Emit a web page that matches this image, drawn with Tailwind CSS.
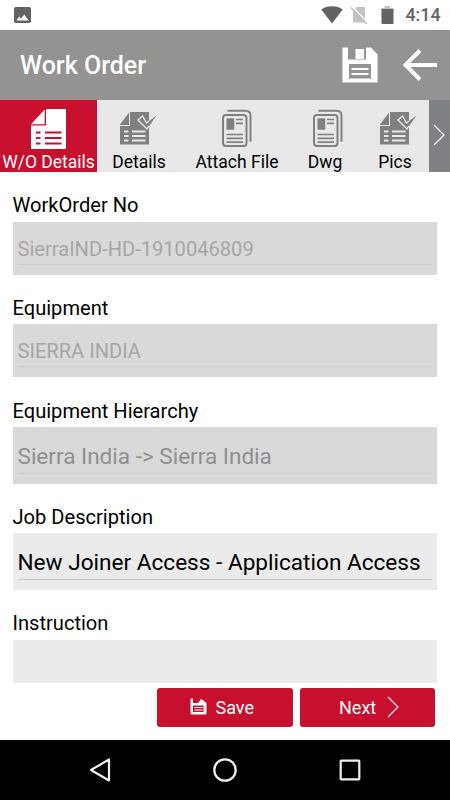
<!DOCTYPE html>
<html lang="en">
<head>
    <meta charset="UTF-8">
    <meta name="viewport" content="width=device-width, initial-scale=1.0">
    <title>Work Order</title>
    <script src="https://cdn.jsdelivr.net/npm/@tailwindcss/browser@4"></script>
</head>
<body class="bg-white font-['Roboto',sans-serif]">
<div class="w-[450px] h-[800px] flex flex-col overflow-hidden text-black">
    <!-- Status bar -->
    <div class="h-[30px] shrink-0 flex items-center pl-[14px] pr-[9px] text-[#636363]">
        <svg class="w-[17px] h-[16px]" viewBox="0 0 17 16"><rect width="17" height="16" rx="1.8" fill="currentColor"/><path d="M2.5 13.5 5.2 9.5 7 11.8 10.2 7.5 14.7 13.5z" fill="#fff"/></svg>
        <svg class="ml-auto w-[22px] h-[18px]" viewBox="0 0 22 18"><path d="M0.3 3.5C6 -.8 16 -.8 21.700 3.500L11 17.500z" fill="currentColor"/></svg>
        <svg class="ml-[7px] w-[18px] h-[18px]" viewBox="0 0 18 18"><path d="M3 4.500 6.500 1h7.300q1.200 0 1.200 1.200V16.500H3z" fill="#c3c3c3"/><path d="M2 .5 18 17" stroke="#fff" stroke-width="1.500"/><path d="M1 1.500 17 18" stroke="#bdbdbd" stroke-width="1.400"/></svg>
        <svg class="ml-[13px] w-[13px] h-[18px]" viewBox="0 0 13 18"><path d="M3.500 0h5.500v2h3.500v2H.5V2h3z" fill="#c3c3c3"/><path d="M.5 3h12v14q0 1-1 1h-10q-1 0-1-1z" fill="currentColor"/></svg>
        <span class="ml-[11.5px] w-[35.5px] text-[17.8px] leading-[20px] font-medium whitespace-nowrap">4:14</span>
    </div>

    <!-- Title bar -->
    <header class="h-[70px] shrink-0 flex items-center bg-[#949391] text-white pl-5 pr-[12px] pt-[2px]">
        <h1 class="text-[25px] font-medium">Work Order</h1>
        <svg class="ml-auto mb-[3px] w-[36px] h-[36px]" viewBox="0 0 36 36">
            <path d="M.5 .5H6v12h18V.5h5l6.500 7V35.500H.5z" fill="#fff"/>
            <rect x="13.500" y="2" width="8.500" height="10" fill="#fff"/>
            <rect x="7" y="17" width="22" height="14.500" fill="#949391"/>
            <path d="M9.500 22h17M9.500 27h17" stroke="#fff" stroke-width="2"/>
        </svg>
        <svg class="ml-[24px] mb-[3px] w-[36px] h-[34px]" viewBox="0 0 36 34"><path d="M35 17H4M18 2.500 3.500 17 18 31.500" fill="none" stroke="#fff" stroke-width="4"/></svg>
    </header>

    <!-- Tabs -->
    <nav class="h-[72px] shrink-0 flex overflow-hidden bg-[#e8e8e8] text-[17.5px] leading-[20px] text-center whitespace-nowrap">
        <div class="w-[97px] shrink-0 bg-[#c8102e] text-white flex flex-col items-center pt-[9px]">
            <svg class="w-[35px] h-[40px]" viewBox="0 0 35 40">
                <path d="M15 0H35v40H0V16.500h15z" fill="#fff"/>
                <path d="M13.700 .5V15.200H0z" fill="#fff"/>
                <path d="M5 23.500h4.500M5 29h4.500M5 34.500h4.500M14 23.500h16.500M14 29h16.500M14 34.500h16.500" stroke="#c8102e" stroke-width="2.200"/>
            </svg>
            <span class="mt-[3px]">W/O Details</span>
        </div>
        <div class="w-[84px] shrink-0 flex flex-col items-center pt-[12px]">
            <svg class="mr-px w-[37px] h-[33px]" viewBox="0 0 37 33">
                <path d="M10 0H29v32.500H0V14h10z" fill="#808080"/>
                <path d="M9 .5V13H0V12.500z" fill="#808080"/>
                <path d="M4 19.500h4.500M4 24h4.500M4 28.500h4.500M12 19.500h13.500M12 24h13.500M12 28.500h13.500" stroke="#e8e8e8" stroke-width="1.800"/>
                <path d="M18 8 22.500 4 26.500 11 36.500 3.500 27 17z" fill="#808080"/>
                <path d="M29 9 26.500 11 22.500 4 18 8 27 17 29 14" fill="none" stroke="#e8e8e8" stroke-width="1.400"/>
            </svg>
            <span class="mt-[7px]">Details</span>
        </div>
        <div class="w-[112px] shrink-0 flex flex-col items-center pt-[9px]">
            <svg class="mr-px w-[30px] h-[40px]" viewBox="0 0 30 40" fill="none" stroke="#808080" stroke-width="2">
                <rect x="1" y="6" width="23.500" height="31" rx="3"/>
                <path d="M5.500 1.800h18q5 0 5 5v26"/>
                <rect x="4.500" y="9.300" width="7.700" height="11.400" fill="#808080" stroke="none"/>
                <path d="M14 10.500h7M14 14.300h7M4.500 25.500h16.500M4.500 29.300h16.500M4.500 33.200h16.500" stroke-width="1.700"/>
            </svg>
            <span class="mt-[3px]">Attach File</span>
        </div>
        <div class="w-[64px] shrink-0 flex flex-col items-center pt-[9px]">
            <svg class="ml-[5px] w-[30px] h-[40px]" viewBox="0 0 30 40" fill="none" stroke="#808080" stroke-width="2">
                <rect x="1" y="6" width="23.500" height="31" rx="3"/>
                <path d="M5.500 1.800h18q5 0 5 5v26"/>
                <rect x="4.500" y="9.300" width="7.700" height="11.400" fill="#808080" stroke="none"/>
                <path d="M14 10.500h7M14 14.300h7M4.500 25.500h16.500M4.500 29.300h16.500M4.500 33.200h16.500" stroke-width="1.700"/>
            </svg>
            <span class="mt-[3px]">Dwg</span>
        </div>
        <div class="w-[72px] shrink-0 flex flex-col items-center pt-[12px] pl-[4px]">
            <svg class="ml-[6px] w-[37px] h-[33px]" viewBox="0 0 37 33">
                <path d="M10 0H29v32.500H0V14h10z" fill="#808080"/>
                <path d="M9 .5V13H0V12.500z" fill="#808080"/>
                <path d="M4 19.500h4.500M4 24h4.500M4 28.500h4.500M12 19.500h13.500M12 24h13.500M12 28.500h13.500" stroke="#e8e8e8" stroke-width="1.800"/>
                <path d="M18 8 22.500 4 26.500 11 36.500 3.500 27 17z" fill="#808080"/>
                <path d="M29 9 26.500 11 22.500 4 18 8 27 17 29 14" fill="none" stroke="#e8e8e8" stroke-width="1.400"/>
            </svg>
            <span class="mt-[7px]">Pics</span>
        </div>
        <div class="w-[21px] shrink-0 bg-[#7f8083]">
            <svg class="mt-[24px] ml-[4px] w-[13px] h-[22px]" viewBox="0 0 13 22"><path d="M1 1 11 11 1 21" fill="none" stroke="#fff" stroke-width="1.200"/></svg>
        </div>
    </nav>

    <!-- Form -->
    <main class="h-[511px] shrink-0 pl-[12.5px] pr-[13px] text-[20.1px] leading-[24px] whitespace-nowrap">
        <label class="block mt-[21px]">WorkOrder No</label>
        <div class="mt-[5px] h-[53px] bg-[#d9d9d9] px-[5px] pt-[15px] text-[#a6a6a6]">
            <div class="h-[28px] border-b border-[#cfcfcf]">SierraIND-HD-1910046809</div>
        </div>
        <label class="block mt-[21px]">Equipment</label>
        <div class="mt-[4px] h-[53px] bg-[#d9d9d9] px-[5px] pt-[15px] text-[#a6a6a6]">
            <div class="h-[28px] border-b border-[#cfcfcf]">SIERRA INDIA</div>
        </div>
        <label class="block mt-[22px]">Equipment Hierarchy</label>
        <div class="mt-[4px] h-[56.5px] bg-[#d9d9d9] px-[5px] pt-[18px] text-[22.55px] text-[#8f8f8f]">
            <div class="h-[29px] border-b border-[#cfcfcf]">Sierra India -&gt; Sierra India</div>
        </div>
        <label class="block mt-[21.5px]">Job Description</label>
        <div class="mt-[4px] h-[56.5px] bg-[#ebebeb] px-[5px] pt-[18px] text-[22.6px]">
            <div class="h-[29px] border-b border-[#c8c8c8]">New Joiner Access - Application Access</div>
        </div>
        <label class="block mt-[21.5px]">Instruction</label>
        <div class="mt-[4.5px] h-[43.500px] bg-[#ebebeb]"></div>
    </main>

    <!-- Actions -->
    <div class="h-[57px] shrink-0 flex justify-end gap-[7px] pt-[5px] pr-[15px] text-white text-[18px]">
        <button class="w-[136px] h-[39px] rounded-[3px] bg-[#c8102e] flex items-center pl-[32.5px]">
            <svg class="w-[17px] h-[17px] mb-[2px]" viewBox="0 0 17 17">
                <path d="M1.500 .5H3v4.500h5.500V3.500H10V1.500h2L16.500 5v10q0 1.500-1.500 1.500H2Q.5 16.500 .5 15V1.500q0-1 1-1z" fill="#fff"/>
                <rect x="3" y="7.500" width="10.500" height="6.500" fill="#c8102e"/>
                <path d="M4.500 9.500h8M4.500 12h8" stroke="#fff" stroke-width="1.200"/>
            </svg>
            <span class="ml-[9px]">Save</span>
        </button>
        <button class="w-[135px] h-[39px] rounded-[3px] bg-[#c8102e] flex items-center pl-[39px]">
            <span class="w-[48px] text-left">Next</span>
            <svg class="w-[13px] h-[22px] mb-[2px]" viewBox="0 0 13 22"><path d="M1 1 11 11 1 21" fill="none" stroke="#fff" stroke-width="1.100"/></svg>
        </button>
    </div>

    <!-- System navigation -->
    <div class="h-[60px] shrink-0 flex items-center bg-black">
        <svg class="ml-[89px] w-[22px] h-[24px]" viewBox="0 0 22 24"><path d="M20 1.500V22.500L2 12z" fill="none" stroke="#eee" stroke-width="2.200" stroke-linejoin="round"/></svg>
        <svg class="ml-[102px] w-[24px] h-[24px]" viewBox="0 0 24 24"><circle cx="12" cy="12" r="10.700" fill="none" stroke="#eee" stroke-width="2.300"/></svg>
        <svg class="ml-[102px] w-[22px] h-[22px]" viewBox="0 0 22 22"><rect x="1.700" y="1.700" width="18.600" height="18.600" rx=".5" fill="none" stroke="#eee" stroke-width="2.200"/></svg>
    </div>
</div>
</body>
</html>
